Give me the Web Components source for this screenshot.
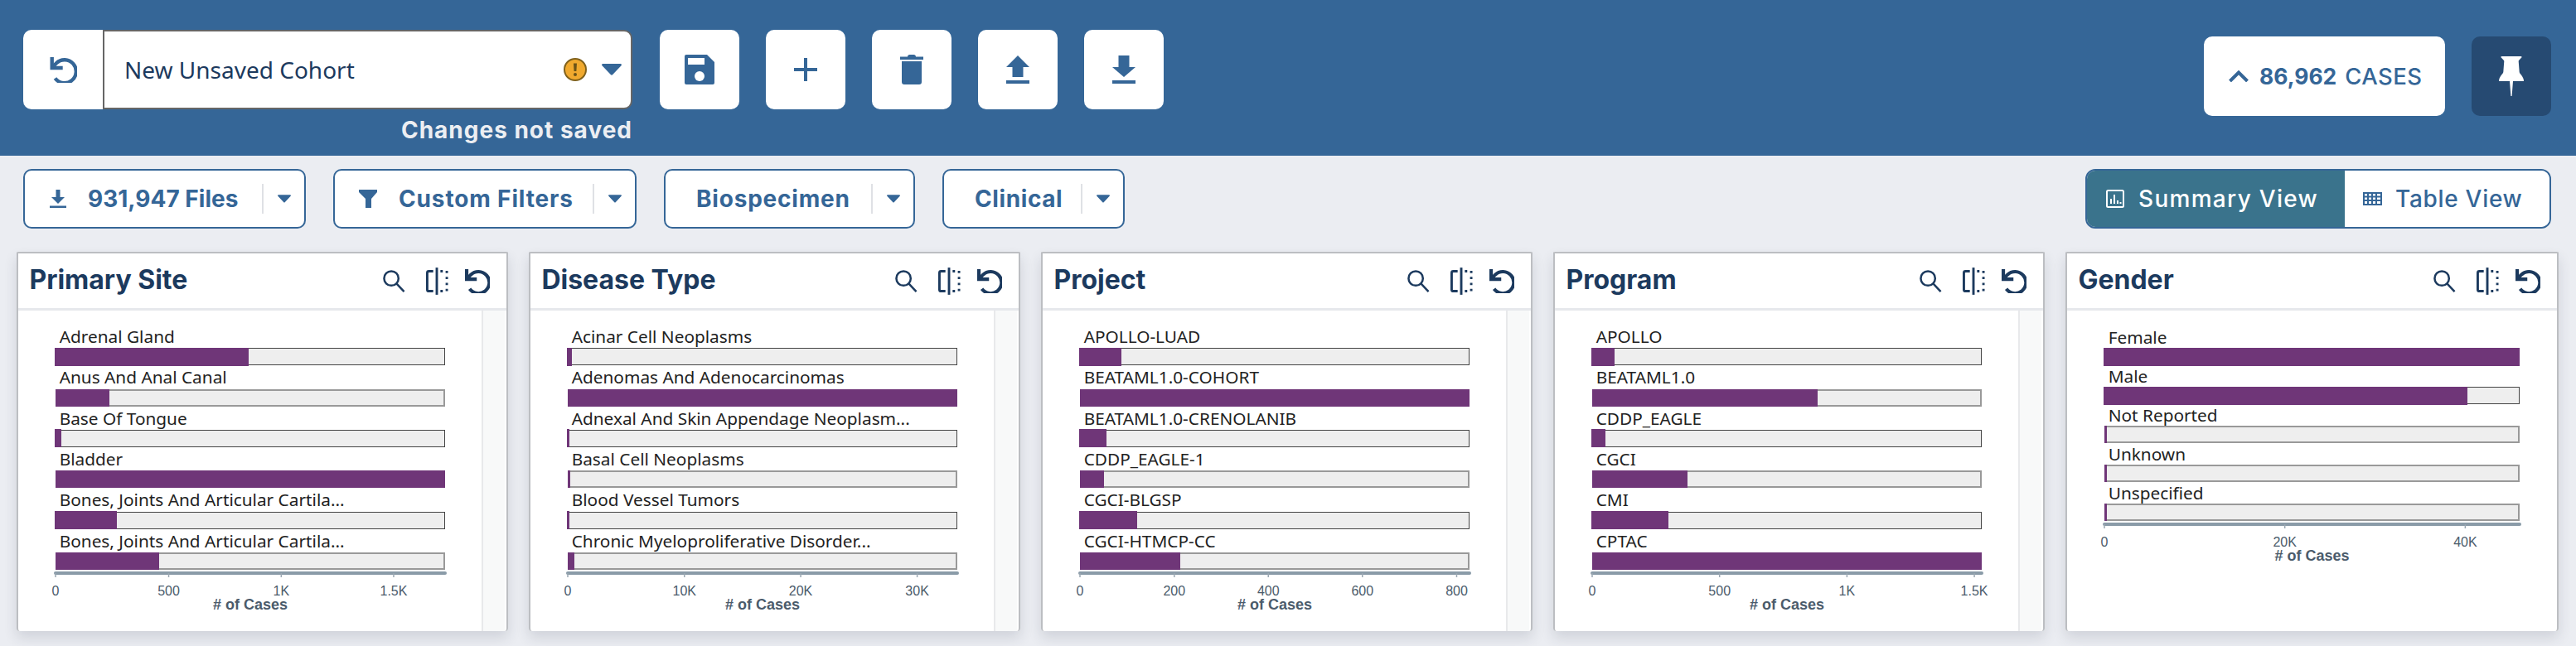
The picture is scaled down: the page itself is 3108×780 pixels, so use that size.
<!DOCTYPE html>
<html lang="en">
<head>
<meta charset="utf-8">
<title>Cohort Builder</title>
<style>
  html, body { margin: 0; padding: 0; background: #ebedf2; overflow: hidden; }
  body { width: 3108px; height: 780px; font-family: "Noto Sans", sans-serif; }
</style>
</head>
<body>
<cohort-bar></cohort-bar>
<view-bar></view-bar>
<facet-grid>
  <facet-card heading="Primary Site" axis="0:0,500:.2905,1K:.5794,1.5K:.868" track>
    <bar-row value=".496">Adrenal Gland</bar-row>
    <bar-row value=".139" soft>Anus And Anal Canal</bar-row>
    <bar-row value=".017">Base Of Tongue</bar-row>
    <bar-row value="1" soft>Bladder</bar-row>
    <bar-row value=".158">Bones, Joints And Articular Cartila...</bar-row>
    <bar-row value=".267" soft>Bones, Joints And Articular Cartila...</bar-row>
  </facet-card>
  <facet-card heading="Disease Type" axis="0:0,10K:.2995,20K:.598,30K:.897" track>
    <bar-row value=".012">Acinar Cell Neoplasms</bar-row>
    <bar-row value="1" soft>Adenomas And Adenocarcinomas</bar-row>
    <bar-row value=".003">Adnexal And Skin Appendage Neoplasm...</bar-row>
    <bar-row value=".003" soft>Basal Cell Neoplasms</bar-row>
    <bar-row value=".007">Blood Vessel Tumors</bar-row>
    <bar-row value=".017" soft>Chronic Myeloproliferative Disorder...</bar-row>
  </facet-card>
  <facet-card heading="Project" axis="0:0,200:.2422,400:.4835,600:.725,800:.967" track>
    <bar-row value=".108">APOLLO-LUAD</bar-row>
    <bar-row value="1" soft>BEATAML1.0-COHORT</bar-row>
    <bar-row value=".07">BEATAML1.0-CRENOLANIB</bar-row>
    <bar-row value=".063" soft>CDDP_EAGLE-1</bar-row>
    <bar-row value=".148">CGCI-BLGSP</bar-row>
    <bar-row value=".259" soft>CGCI-HTMCP-CC</bar-row>
  </facet-card>
  <facet-card heading="Program" axis="0:0,500:.327,1K:.654,1.5K:.981" track>
    <bar-row value=".06">APOLLO</bar-row>
    <bar-row value=".579" soft>BEATAML1.0</bar-row>
    <bar-row value=".036">CDDP_EAGLE</bar-row>
    <bar-row value=".245" soft>CGCI</bar-row>
    <bar-row value=".198">CMI</bar-row>
    <bar-row value="1" soft>CPTAC</bar-row>
  </facet-card>
  <facet-card heading="Gender" axis="0:0,20K:.4345,40K:.869" compact>
    <bar-row value="1">Female</bar-row>
    <bar-row value=".875">Male</bar-row>
    <bar-row value=".002" soft>Not Reported</bar-row>
    <bar-row value=".002" soft>Unknown</bar-row>
    <bar-row value=".001" soft>Unspecified</bar-row>
  </facet-card>
</facet-grid>

<script>
const ICONS = {
  undo: `<svg viewBox="0 0 32 32" fill="none" stroke="currentColor" stroke-width="4.4"><path d="M2.200 1v13h13"/><path d="M3 13 7.500 8.200A14 14 0 1 1 6 26.500"/></svg>`,
  save: `<svg viewBox="0 0 36 36"><path fill="currentColor" d="M2 0h25l9 9v25a2 2 0 0 1-2 2H2a2 2 0 0 1-2-2V2a2 2 0 0 1 2-2z"/><rect x="4" y="4" width="20" height="8" fill="#fff"/><circle cx="18" cy="26" r="6" fill="#fff"/></svg>`,
  plus: `<svg viewBox="0 0 28 28"><path fill="currentColor" d="M12 0h4v12h12v4H16v12h-4V16H0v-4h12z"/></svg>`,
  trash: `<svg viewBox="0 0 28 36"><path fill="currentColor" d="M9 2.500C9 1 10 0 11.500 0h5C18 0 19 1 19 2.500h9V6H0V2.500zM2 8h24v25a3 3 0 0 1-3 3H5a3 3 0 0 1-3-3z"/></svg>`,
  upload: `<svg viewBox="0 0 28 34"><path fill="currentColor" d="M14 0l14 14h-7.500v12h-13V14H0zM0 30h28v4H0z"/></svg>`,
  download: `<svg viewBox="0 0 28 34"><path fill="currentColor" d="M7.500 0h13v14H28L14 26 0 14h7.500zM0 30h28v4H0z"/></svg>`,
  dl: `<svg viewBox="0 0 20 22"><path fill="currentColor" d="M7.500 0h5v9H18l-8 8-8-8h5.500zM0 19.500h20V22H0z"/></svg>`,
  funnel: `<svg viewBox="0 0 22 22"><path fill="currentColor" d="M0 0h22v3l-7 8v11H8V11L0 3z"/></svg>`,
  caret: `<svg viewBox="0 0 24 14"><path fill="currentColor" d="M1.500 0h21c1.300 0 1.900 1.400 1 2.300L13 13.300c-.6.6-1.400.6-2 0L.5 2.300C-.4 1.400.2 0 1.500 0z"/></svg>`,
  warn: `<svg viewBox="0 0 28 28"><circle cx="14" cy="14" r="13" fill="#f0a92e" stroke="#80611c" stroke-width="2"/><path fill="#6b5317" d="M12 6.500h4l-.6 9.500h-2.800z"/><circle cx="14" cy="20" r="2" fill="#6b5317"/></svg>`,
  chevron: `<svg viewBox="0 0 24 14" fill="none" stroke="currentColor" stroke-width="4"><path d="M1.500 13 12 2.500 22.500 13"/></svg>`,
  pin: `<svg viewBox="0 0 30 48"><path fill="currentColor" d="M3.500 0h23c.8 0 1.200.5 1 1.200L24 5c-.2.3-.3.6-.3 1l1 13c.1.800.4 1.300 1 2 2 2.300 3.800 4.800 4.300 8 .1.700-.3 1-1 1H17l-1.400 18h-1.200L13 30H1c-.7 0-1.100-.3-1-1 .5-3.200 2.300-5.700 4.300-8 .6-.7.9-1.200 1-2l1-13c0-.4-.1-.7-.3-1L2.500 1.200C2.300.5 2.700 0 3.500 0z"/></svg>`,
  summary: `<svg viewBox="0 0 22 22" fill="none" stroke="currentColor"><rect x="1" y="1" width="20" height="20" rx="1.500" stroke-width="2"/><path stroke-width="2" d="M6 17v-6M10 17V6M14 17v-4M17.500 17v-2"/></svg>`,
  table: `<svg viewBox="0 0 23 16"><path fill="currentColor" fill-rule="evenodd" d="M0 0h23v16H0zM2 2v2.500h3V2zm5 0v2.500h3V2zm5 0v2.500h3V2zm5 0v2.500h4V2zM2 6.500V9h3V6.500zm5 0V9h3V6.500zm5 0V9h3V6.500zm5 0V9h4V6.500zM2 11v3h3v-3zm5 0v3h3v-3zm5 0v3h3v-3zm5 0v3h4v-3z"/></svg>`,
  search: `<svg viewBox="0 0 28 28" fill="none" stroke="currentColor" stroke-width="2.600"><circle cx="10.500" cy="10.500" r="9"/><path d="M17 17l9.500 10"/></svg>`,
  columns: `<svg viewBox="0 0 28 34" fill="none" stroke="currentColor"><path stroke-width="3" d="M9 4.500H3.500a2 2 0 0 0-2 2v21a2 2 0 0 0 2 2H9"/><path stroke-width="3" d="M13.500 0v34"/><path stroke-width="3" stroke-dasharray="3 4.500" d="M26 4v27"/><path stroke-width="3" d="M18 4.500h3M18 29.500h3"/></svg>`
};

class UiIcon extends HTMLElement {
  constructor() {
    super();
    const w = this.getAttribute("w"), h = this.getAttribute("h");
    this.attachShadow({ mode: "open" }).innerHTML = `
      <style>
        :host { display: block; flex: none; width: ${w}px; height: ${h}px; }
        svg { display: block; width: 100%; height: 100%; }
      </style>${ICONS[this.getAttribute("name")]}`;
  }
}
customElements.define("ui-icon", UiIcon);

class IconButton extends HTMLElement {
  constructor() {
    super();
    this.attachShadow({ mode: "open" }).innerHTML = `
      <style>
        :host {
          display: flex; align-items: center; justify-content: center; flex: none;
          width: 96px; height: 96px; background: #fff; color: #356697; border-radius: 10px;
        }
      </style>
      <slot></slot>`;
  }
}
customElements.define("icon-button", IconButton);

class CohortBar extends HTMLElement {
  constructor() {
    super();
    this.attachShadow({ mode: "open" }).innerHTML = `
      <style>
        :host {
          display: flex; align-items: flex-start; box-sizing: border-box; height: 188px;
          padding: 36px 30px 0 28px; background: #356697;
        }
        .reset { border-radius: 10px 0 0 10px; }
        .name { width: 639px; margin-right: 33px; flex: none; }
        .combo {
          display: flex; align-items: center; box-sizing: border-box; height: 96px;
          padding: 0 11px 0 24px; background: #fff; border: 2px solid #666;
          border-radius: 0 10px 10px 0; color: #1c3a5e; font: 400 28px "Noto Sans", sans-serif;
        }
        .combo span { flex: 1; }
        .combo .caret { margin-left: 18px; color: #356697; }
        .saved {
          margin-top: 5px; text-align: right; color: #eceef2;
          font: 700 28px/40px Inter, sans-serif; letter-spacing: 1px;
        }
        .actions { display: flex; gap: 32px; }
        .right { display: flex; gap: 32px; margin: 8px 0 0 auto; }
        .cases {
          display: flex; align-items: center; box-sizing: border-box; width: 291px; height: 96px;
          padding-left: 30px; background: #fff; border-radius: 10px; color: #356697;
          font: 500 27.500px Inter, sans-serif; letter-spacing: .4px;
        }
        .cases b { font-weight: 700; font-size: 26.500px; letter-spacing: 0; margin: 0 10px 0 13px; }
        .pin { background: #264a72; color: #fff; }
      </style>
      <icon-button class="reset"><ui-icon name="undo" w="33" h="32"></ui-icon></icon-button>
      <div class="name">
        <div class="combo">
          <span>New Unsaved Cohort</span>
          <ui-icon name="warn" w="28" h="28"></ui-icon>
          <ui-icon class="caret" name="caret" w="24" h="14"></ui-icon>
        </div>
        <div class="saved">Changes not saved</div>
      </div>
      <div class="actions">
        <icon-button><ui-icon name="save" w="36" h="36"></ui-icon></icon-button>
        <icon-button><ui-icon name="plus" w="28" h="28"></ui-icon></icon-button>
        <icon-button><ui-icon name="trash" w="28" h="36"></ui-icon></icon-button>
        <icon-button><ui-icon name="upload" w="28" h="34"></ui-icon></icon-button>
        <icon-button><ui-icon name="download" w="28" h="34"></ui-icon></icon-button>
      </div>
      <div class="right">
        <div class="cases"><ui-icon name="chevron" w="24" h="14"></ui-icon><b>86,962</b>CASES</div>
        <icon-button class="pin"><ui-icon name="pin" w="30" h="48"></ui-icon></icon-button>
      </div>`;
  }
}
customElements.define("cohort-bar", CohortBar);

class FilterButton extends HTMLElement {
  constructor() {
    super();
    const icon = this.getAttribute("icon");
    const svg = icon ? `<ui-icon name="${icon}" w="${icon === "dl" ? 20 : 22}" h="22"></ui-icon>` : "";
    this.attachShadow({ mode: "open" }).innerHTML = `
      <style>
        :host {
          display: flex; align-items: center; box-sizing: border-box; height: 72px; flex: none;
          background: #fff; border: 2px solid #356697; border-radius: 10px; color: #356697;
          font: 700 28px Inter, sans-serif; letter-spacing: ${this.getAttribute("ls") || 0}px;
        }
        .main {
          display: flex; align-items: center; gap: 26px; box-sizing: border-box;
          padding-left: ${this.getAttribute("pad")}px; width: ${this.getAttribute("label")}px;
        }
        .sep { width: 2px; height: 36px; background: #dfe1e5; }
        .more { display: flex; justify-content: center; width: 49px; }
      </style>
      <div class="main">${svg}<slot></slot></div>
      <div class="sep"></div>
      <div class="more"><ui-icon name="caret" w="16" h="10"></ui-icon></div>`;
  }
}
customElements.define("filter-button", FilterButton);

class ViewBar extends HTMLElement {
  constructor() {
    super();
    this.attachShadow({ mode: "open" }).innerHTML = `
      <style>
        :host { display: flex; gap: 33px; height: 88px; box-sizing: border-box; padding: 16px 30px 0 28px; }
        .views {
          display: flex; margin-left: auto; height: 72px; box-sizing: border-box; width: 562px;
          border: 2px solid #356697; border-radius: 12px; overflow: hidden;
          font: 500 28px Inter, sans-serif;
        }
        .views div { display: flex; align-items: center; }
        .on { width: 311px; box-sizing: border-box; padding-left: 23px; gap: 17px; background: #3a738c; color: #fff; letter-spacing: 1.300px; }
        .off { flex: 1; padding-left: 22px; gap: 16px; background: #fff; color: #356697; letter-spacing: .700px; }
      </style>
      <filter-button icon="dl" pad="30" label="286">931,947 Files</filter-button>
      <filter-button icon="funnel" pad="29" label="311" ls=".85">Custom Filters</filter-button>
      <filter-button pad="37" label="248" ls=".8">Biospecimen</filter-button>
      <filter-button pad="37" label="165" ls=".6">Clinical</filter-button>
      <div class="views">
        <div class="on"><ui-icon name="summary" w="22" h="22"></ui-icon>Summary View</div>
        <div class="off"><ui-icon name="table" w="23" h="16"></ui-icon>Table View</div>
      </div>`;
  }
}
customElements.define("view-bar", ViewBar);

class FacetGrid extends HTMLElement {
  constructor() {
    super();
    this.attachShadow({ mode: "open" }).innerHTML = `
      <style>
        :host {
          display: grid; grid-template-columns: repeat(4, 593px) 595px; gap: 25px; box-sizing: border-box;
          height: 504px; padding: 28px 20px 18px 20.400px;
        }
      </style>
      <slot></slot>`;
  }
}
customElements.define("facet-grid", FacetGrid);

class BarRow extends HTMLElement {
  constructor() {
    super();
    const share = parseFloat(this.getAttribute("value"));
    this.attachShadow({ mode: "open" }).innerHTML = `
      <style>
        :host { display: block; --edge: 1.500px; color: #222; font: 400 20.800px "Noto Sans", sans-serif; }
        :host([soft]) { --edge: 2px; }
        .label { height: var(--label-h, 28.400px); line-height: var(--label-lh, 29px); padding-left: 5px; white-space: nowrap; overflow: hidden; }
        .track { position: relative; box-sizing: border-box; height: 21px; background: #eee; border: var(--edge) solid #444; }
        :host([soft]) .track { border-color: #999; }
        /* the fill paints over the track's border, as the chart does */
        .fill {
          position: absolute; top: calc(var(--edge) * -1); bottom: calc(var(--edge) * -1); left: calc(var(--edge) * -1);
          width: calc((100% + var(--edge) * 2) * ${share}); min-width: 3px; background: #6f3678;
        }
      </style>
      <div class="label"><slot></slot></div>
      <div class="track"><div class="fill"></div></div>`;
  }
}
customElements.define("bar-row", BarRow);

class FacetCard extends HTMLElement {
  constructor() {
    super();
    const ticks = this.getAttribute("axis").split(",").map(t => t.split(":"));
    const marks = ticks.map(([text, at]) => {
      const x = parseFloat(at) * 100;
      return `<line x1="${x}%" x2="${x}%" y1="4" y2="9"></line><text x="${x}%" y="30.500">${text}</text>`;
    }).join("");
    this.attachShadow({ mode: "open" }).innerHTML = `
      <style>
        :host {
          display: flex; flex-direction: column; box-sizing: border-box; min-width: 0; background: #fff;
          border: solid #bcbec2; border-width: 2px 2px 0; border-radius: 2px 2px 4px 4px;
          box-shadow: 0 8px 16px rgba(40, 50, 70, .14);
        }
        header {
          display: flex; align-items: center; box-sizing: border-box; height: 69px; flex: none;
          padding: 0 20px 0 13px; border-bottom: 3px solid #e6e8ec; color: #1c3a5e;
        }
        h2 { margin: 0 auto 4px 0; font: 700 32px Inter, sans-serif; }
        .search { margin-right: 25px; }
        .columns { margin-right: 20px; }
        .body { display: flex; flex: 1; min-height: 0; }
        .chart { box-sizing: border-box; width: 470px; margin: 16.800px 0 0 44.300px; }
        :host([compact]) .chart { width: 501px; margin-top: 19px; --label-h: 26px; --label-lh: 27px; }
        .side { margin: 0 2px 0 auto; width: 26px; background: #f8f9f9; border-left: 2px solid #e8e9eb; }
        svg { display: block; width: 100%; height: 60px; overflow: visible; }
        .base { stroke: #8a9ba8; stroke-width: 4; stroke-linecap: round; }
        line { stroke: #9aa7b2; stroke-width: 1.500; }
        text { font: 16px "Liberation Sans", sans-serif; fill: #4b5b6b; text-anchor: middle; }
        .title { font-weight: 700; font-size: 18px; }
      </style>
      <header>
        <h2>${this.getAttribute("heading")}</h2>
        <ui-icon class="search" name="search" w="27" h="27"></ui-icon>
        <ui-icon class="columns" name="columns" w="27" h="33"></ui-icon>
        <ui-icon name="undo" w="30" h="30"></ui-icon>
      </header>
      <div class="body">
        <div class="chart">
          <slot></slot>
          <svg>
            <line class="base" x1="0" x2="100%" y1="4" y2="4"></line>
            ${marks}
            <text class="title" x="50%" y="47.500"># of Cases</text>
          </svg>
        </div>
        ${this.hasAttribute("track") ? `<div class="side"></div>` : ""}
      </div>`;
  }
}
customElements.define("facet-card", FacetCard);
</script>
</body>
</html>
